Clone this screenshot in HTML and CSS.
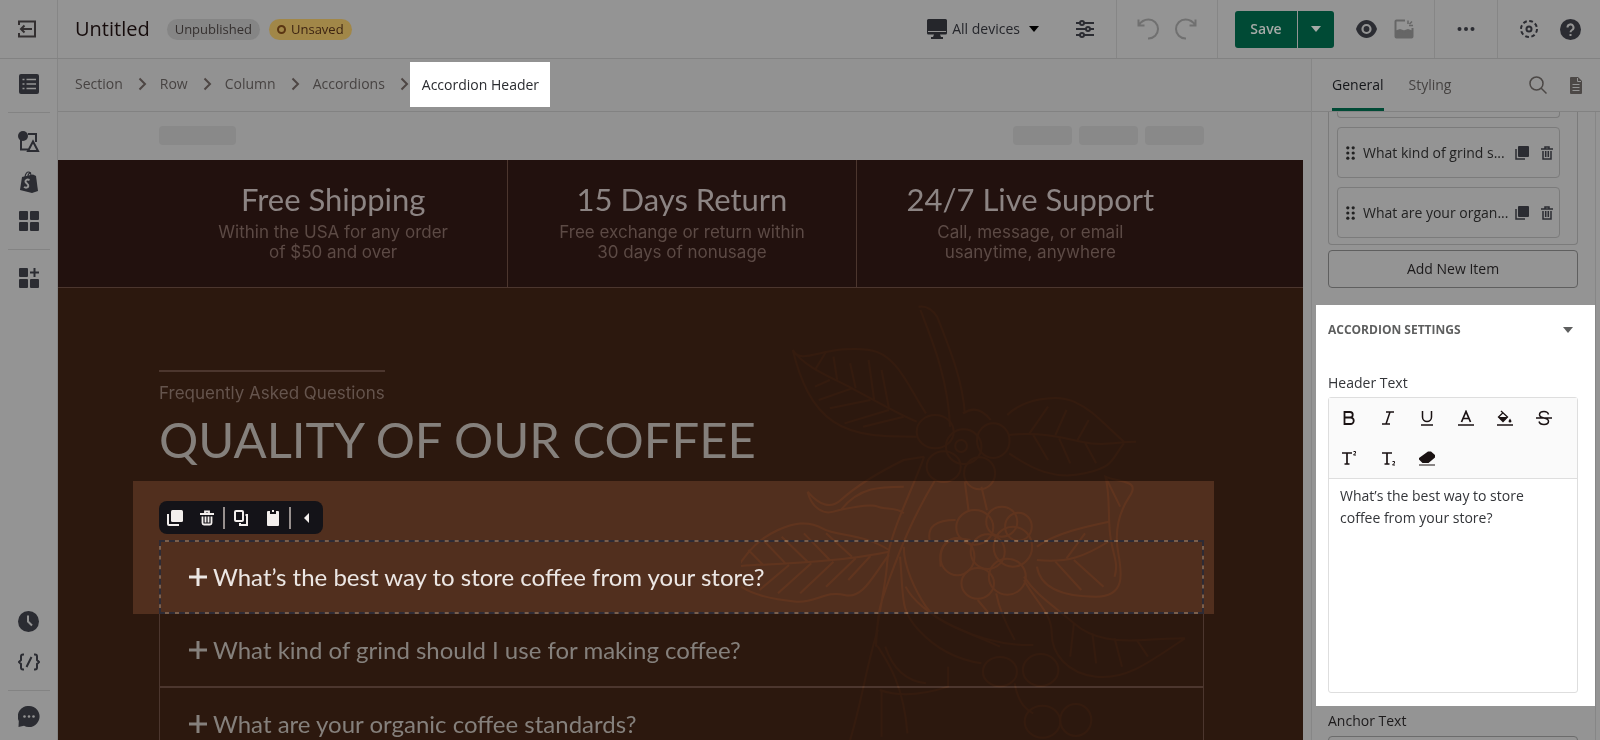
FILE: index.html
```html
<!DOCTYPE html>
<html lang="en">
<head>
<meta charset="utf-8">
<title>Untitled – Page editor</title>
<link rel="stylesheet" href="styles.css">
</head>
<body>
<div class="app">
  <header class="topbar">
    <button class="exit" aria-label="Exit editor">
      <svg width="20" height="20" viewBox="0 0 20 20" fill="none" stroke="currentColor" stroke-width="2"><path d="M2 6V2.500H18V17.500H2V14M15 10H4M7.500 6.500L4 10l3.500 3.500"/></svg>
    </button>
    <div class="title-area">
      <h1 class="page-title">Untitled</h1>
      <span class="pill">Unpublished</span>
      <span class="pill pill-warn"><i class="ring"></i>Unsaved</span>
    </div>
    <div class="group group-devices">
      <button class="devices">
        <svg width="20" height="20" viewBox="0 0 20 20" fill="currentColor"><path d="M1.500 0h17A1.500 1.500 0 0 1 20 1.500V14a1.500 1.500 0 0 1-1.500 1.500H13l1 2.500h2v2H4v-2h2l1-2.500H1.500A1.500 1.500 0 0 1 0 14V1.500A1.500 1.500 0 0 1 1.500 0z"/><path d="M1 12.500h18" stroke="#949494"/></svg>
        <span>All devices</span>
        <svg class="caret" width="10" height="6" viewBox="0 0 10 6"><path d="M0 0h10L5 6z"/></svg>
      </button>
      <button class="icon" aria-label="Settings">
        <svg width="18" height="18" viewBox="0 0 18 18" fill="#949494" stroke="currentColor" stroke-width="2"><path d="M0 3h18M0 9h18M0 15h18"/><circle cx="6" cy="3" r="2"/><circle cx="12" cy="9" r="2"/><circle cx="6" cy="15" r="2"/></svg>
      </button>
    </div>
    <div class="group group-history">
      <button class="icon faded" aria-label="Undo"><svg width="22" height="22" viewBox="0 0 22 22" fill="none" stroke="currentColor" stroke-width="2"><path d="M1.500 1.500v6h6M1.500 7.500C4 3.500 8 1.500 11.500 1.500a9 9 0 0 1 0 19H11"/></svg></button>
      <button class="icon faded" aria-label="Redo"><svg width="22" height="22" viewBox="0 0 22 22" fill="none" stroke="currentColor" stroke-width="2"><path d="M20.500 1.500v6h-6M20.500 7.500C18 3.500 14 1.500 10.500 1.500a9 9 0 0 0 0 19H11"/></svg></button>
    </div>
    <div class="group group-save">
      <div class="split">
        <button class="save">Save</button>
        <button class="save-more" aria-label="More save options"><svg width="10" height="6" viewBox="0 0 10 6" fill="currentColor"><path d="M0 0h10L5 6z"/></svg></button>
      </div>
      <button class="icon" aria-label="Preview"><svg width="21" height="18" viewBox="0 0 21 18"><path d="M10.500 0C5.500 0 1.800 3.500 0 9c1.800 5.500 5.500 9 10.500 9S19.200 14.500 21 9C19.200 3.500 15.500 0 10.500 0z" fill="currentColor"/><circle cx="10.500" cy="9" r="4" fill="currentColor" stroke="#949494" stroke-width="2.200"/></svg></button>
      <button class="icon faded-strong" aria-label="Optimize images"><svg width="20" height="20" viewBox="0 0 20 20" fill="none" stroke="currentColor" stroke-width="2"><path d="M11 1.500H2.500a1 1 0 0 0-1 1v15a1 1 0 0 0 1 1h15a1 1 0 0 0 1-1V9"/><path d="M2 12.500l4-1.500 4 1.500 4-1.500 4 1.500V18H2z" fill="currentColor"/><path d="M14 5V1.500M15.500 5L18 2.500M15 6.500h4" stroke-width="1.500"/></svg></button>
    </div>
    <div class="group group-more">
      <button class="icon" aria-label="More actions"><svg width="18" height="6" viewBox="0 0 18 6" fill="currentColor"><circle cx="2.500" cy="3" r="2"/><circle cx="9" cy="3" r="2"/><circle cx="15.500" cy="3" r="2"/></svg></button>
    </div>
    <div class="group group-help">
      <button class="icon" aria-label="Configuration"><svg width="18" height="18" viewBox="0 0 18 18" fill="none" stroke="currentColor" stroke-width="2"><circle cx="9" cy="9" r="8" stroke-dasharray="3.800 2.480"/><circle cx="9" cy="9" r="2.500"/></svg></button>
      <button class="icon" aria-label="Help"><svg width="21" height="21" viewBox="0 0 21 21"><circle cx="10.500" cy="10.500" r="10.500" fill="currentColor"/><path d="M7.500 8.500a3 3 0 1 1 4.500 2.500c-1 .6-1.500 1-1.500 2.300M10.500 15v2" fill="none" stroke="#949494" stroke-width="2"/></svg></button>
    </div>
  </header>

  <aside class="rail">
    <button class="icon" aria-label="Outline"><svg width="20" height="20" viewBox="0 0 20 20"><rect width="20" height="20" rx="2" fill="currentColor"/><path d="M7.500 5.500H17M7.500 10H17M7.500 14.500H17M3.500 5.500h2M3.500 10h2M3.500 14.500h2" stroke="#949494" stroke-width="1.700"/></svg></button>
    <hr>
    <button class="icon" aria-label="Elements"><svg width="22" height="22" viewBox="0 0 22 22" fill="none" stroke="currentColor" stroke-width="2"><path d="M10 3h8v8M3 9v9.500h7"/><circle cx="5" cy="5" r="5" fill="currentColor" stroke="none"/><path d="M15 10.500L10 20h10z"/></svg></button>
    <button class="icon" aria-label="Shopify"><svg width="20" height="22" viewBox="0 0 20 22"><path d="M3 6l11-2.500 3 1.500 2 15-6 2L1 19z" fill="currentColor"/><path d="M6 6C6.500 3 8 1 9.500 1s2.500 1.500 2.500 4M9 5c0-2 1.500-3.500 3-3" fill="none" stroke="currentColor" stroke-width="1.200"/><path d="M10.500 9C8 8 6.300 9 6.500 10.700S9.700 13 9.300 15s-2.800 2-4.300 1" fill="none" stroke="#949494" stroke-width="2"/></svg></button>
    <button class="icon" aria-label="Blocks"><svg width="20" height="20" viewBox="0 0 20 20" fill="currentColor"><rect width="9" height="9" rx="1"/><rect x="11" width="9" height="9" rx="1"/><rect y="11" width="9" height="9" rx="1"/><rect x="11" y="11" width="9" height="9" rx="1"/></svg></button>
    <hr>
    <button class="icon" aria-label="Add block"><svg width="20" height="20" viewBox="0 0 20 20" fill="currentColor"><rect width="9" height="9" rx="1"/><rect y="11" width="9" height="9" rx="1"/><rect x="11" y="11" width="9" height="9" rx="1"/><path d="M15.500 0v9M11 4.500h9" stroke="currentColor" stroke-width="2"/></svg></button>
    <div class="rail-end">
      <button class="icon" aria-label="History"><svg width="21" height="21" viewBox="0 0 21 21"><circle cx="10.500" cy="10.500" r="10.500" fill="currentColor"/><path d="M10 4.500v6l4 4" fill="none" stroke="#949494" stroke-width="2"/></svg></button>
      <button class="icon" aria-label="Custom code"><svg width="22" height="18" viewBox="0 0 22 18" fill="none" stroke="currentColor" stroke-width="2"><path d="M6 1.500H5C3.500 1.500 3 2.300 3 3.500V7L1 9l2 2v3.500c0 1.200.5 2 2 2h1M16 1.500h1c1.500 0 2 .8 2 2V7l2 2-2 2v3.500c0 1.200-.5 2-2 2h-1M13.500 4l-5 10"/></svg></button>
      <hr>
      <button class="icon" aria-label="Chat"><svg width="22" height="21" viewBox="0 0 22 21"><path d="M11 0a10.500 10.500 0 1 1-5 19.700L.5 21l.3-6A10.500 10.500 0 0 1 11 0z" fill="currentColor"/><g fill="#949494"><circle cx="6.500" cy="10.500" r="1.300"/><circle cx="11" cy="10.500" r="1.300"/><circle cx="15.500" cy="10.500" r="1.300"/></g></svg></button>
    </div>
  </aside>

  <main class="stage">
    <nav class="crumbs" aria-label="Breadcrumb">
      <a href="#">Section</a>
      <svg class="chev" width="9" height="14" viewBox="0 0 9 14"><path d="M1.500 1.500L7 7l-5.500 5.500"/></svg>
      <a href="#">Row</a>
      <svg class="chev" width="9" height="14" viewBox="0 0 9 14"><path d="M1.500 1.500L7 7l-5.500 5.500"/></svg>
      <a href="#">Column</a>
      <svg class="chev" width="9" height="14" viewBox="0 0 9 14"><path d="M1.500 1.500L7 7l-5.500 5.500"/></svg>
      <a href="#">Accordions</a>
      <svg class="chev" width="9" height="14" viewBox="0 0 9 14"><path d="M1.500 1.500L7 7l-5.500 5.500"/></svg>
      <a href="#" class="current" aria-current="page">Accordion Header</a>
    </nav>
    <div class="canvas">
      <div class="skeleton"><i class="wide"></i><i></i><i></i><i></i></div>
      <section class="promo">
        <div class="promo-grid">
          <div class="perk"><h2>Free Shipping</h2><p>Within the USA for any order<br>of $50 and over</p></div>
          <div class="perk"><h2>15 Days Return</h2><p>Free exchange or return within<br>30 days of nonusage</p></div>
          <div class="perk"><h2>24/7 Live Support</h2><p>Call, message, or email<br>usanytime, anywhere</p></div>
        </div>
      </section>
      <section class="faq">
        <svg class="botanical" viewBox="0 0 1568 1380" preserveAspectRatio="none" fill="none">
          <g>
            <path d="M480 80Q510 75 530 110C570 220 600 310 605 400M485 90C520 190 560 300 565 440M140 210C170 260 240 290 300 325S420 400 475 425M140 210C160 300 190 380 250 425S390 470 475 470M140 210C160 250 200 215 280 208S390 220 420 260S470 350 500 400"/>
            <path d="M200 270L230 215M260 300L250 230M310 325L295 250M360 360L345 240M400 385L380 270M240 300L200 320M300 325L210 360M350 360L240 385M400 390L280 430M440 410L330 440"/>
            <path d="M725 465C800 455 860 470 920 485S1020 485 1068 485M720 405C760 360 850 340 900 365S970 420 1035 485M725 520C790 570 850 600 930 580S1000 540 1035 490M780 460L830 380M850 465L880 390M910 480L940 420M790 465L830 540M860 475L890 550M930 488L960 550"/>
            <ellipse cx="525" cy="455" rx="50" ry="50"/><ellipse cx="602" cy="500" rx="48" ry="52"/><ellipse cx="595" cy="498" rx="16" ry="18"/><ellipse cx="682" cy="482" rx="44" ry="52"/><ellipse cx="548" cy="560" rx="46" ry="46"/><ellipse cx="645" cy="580" rx="42" ry="48"/><path d="M600 400Q640 370 675 420"/>
            <path d="M180 635Q230 700 270 660Q330 600 440 540L495 530M180 635C190 680 220 705 250 695S350 670 370 680S420 680 440 700M270 690C320 620 380 620 440 620"/>
            <path d="M495 530C460 640 400 760 395 850S350 1100 370 1100M525 600C460 720 430 810 400 900S370 1000 365 1100M440 800C440 860 470 930 500 980S600 1050 700 1100M430 830C440 960 430 990 480 1050S590 1140 650 1150"/>
            <path d="M-30 860C80 850 250 850 400 815M-30 900C20 800 60 770 100 750S180 720 220 745S330 760 400 810M0 920C40 950 100 960 150 965S230 930 280 945S360 880 400 825M60 855L20 810M120 850L60 780M180 845L110 770M240 840L170 760M300 830L230 760M130 855L50 930M190 850L100 940M250 845L160 940M310 835L230 920M350 828L290 900"/>
            <path d="M605 605L615 690M650 620L665 690M510 780Q500 720 580 720M540 860Q530 760 620 780"/>
            <ellipse cx="632" cy="742" rx="50" ry="52"/><ellipse cx="705" cy="725" rx="42" ry="45"/><ellipse cx="750" cy="740" rx="36" ry="42"/><ellipse cx="735" cy="800" rx="52" ry="60"/><ellipse cx="667" cy="815" rx="46" ry="52"/><ellipse cx="585" cy="830" rx="46" ry="56"/><ellipse cx="640" cy="910" rx="44" ry="46"/><ellipse cx="720" cy="890" rx="50" ry="54"/>
            <path d="M800 840C880 850 930 830 1000 780M800 800C850 760 930 740 995 725M800 860C810 930 880 950 960 950S1030 880 1020 820S1020 700 1050 650S1030 610 985 590C1000 650 990 720 1000 780S1020 850 1010 890M850 845L920 930M900 840L980 920M880 835L930 760M985 590L1025 680"/>
            <path d="M765 890C800 950 850 980 900 1030S1020 1085 1090 1080S1180 1075 1200 1075M765 900C800 970 840 1000 840 1060S880 1180 960 1190S1100 1150 1200 1075M900 1030L890 1130M950 1060L960 1150M1010 1075L1030 1160M1070 1080L1100 1130M445 920C480 1000 640 1100 790 1095M690 940Q700 1000 740 1080M640 960L670 1000"/>
            <ellipse cx="700" cy="1175" rx="46" ry="44"/><ellipse cx="810" cy="1170" rx="48" ry="48"/><ellipse cx="815" cy="1325" rx="48" ry="48"/><ellipse cx="905" cy="1320" rx="42" ry="48"/>
            <path d="M370 1050C340 1150 330 1250 295 1380M370 1100C400 1150 440 1220 450 1360M375 1230Q450 1260 560 1220L560 1160M390 1100Q420 1200 500 1210M380 1230L380 1370M740 1210Q750 1280 790 1300"/>
          </g>
        </svg>
        <div class="faq-inner">
          <p class="eyebrow">Frequently Asked Questions</p>
          <h2 class="faq-title">QUALITY OF OUR COFFEE</h2>
          <div class="spotlight">
            <div class="el-toolbar" role="toolbar" aria-label="Element actions">
              <button aria-label="Duplicate"><svg width="16" height="16" viewBox="0 0 16 16"><rect x="4" width="12" height="12" rx="1.500" fill="currentColor"/><path d="M1 4v10q0 1 1 1h10" fill="none" stroke="currentColor" stroke-width="2"/></svg></button>
              <button aria-label="Delete"><svg width="14" height="16" viewBox="0 0 14 16" fill="none" stroke="currentColor" stroke-width="1.800"><path d="M0 4h14M5 3.500V1.500h4v2M2.500 6.500V13q0 1.500 1.500 1.500h6q1.500 0 1.500-1.500V6.500M5.500 6.500v6M8.500 6.500v6"/></svg></button>
              <i class="bar"></i>
              <button aria-label="Copy style"><svg width="14" height="16" viewBox="0 0 14 16" fill="none" stroke="currentColor" stroke-width="2"><rect x="1" y="1" width="8" height="10" rx="1"/><path d="M11.500 5H13v10H6v-2"/></svg></button>
              <button aria-label="Paste style"><svg width="12" height="16" viewBox="0 0 12 16"><path d="M1 1h2v3h6V1h2q1 0 1 1v13q0 1-1 1H1q-1 0-1-1V2q0-1 1-1z" fill="currentColor"/><path d="M5 0h2v2H5z" fill="currentColor"/></svg></button>
              <i class="bar"></i>
              <button aria-label="Collapse"><svg width="6" height="10" viewBox="0 0 6 10" fill="currentColor"><path d="M5 0v10L0 5z"/></svg></button>
            </div>
            <button class="question selected"><svg class="plus" width="18" height="18" viewBox="0 0 18 18"><path d="M9 0v18M0 9h18"/></svg>What’s the best way to store coffee from your store?</button>
          </div>
          <button class="question"><svg class="plus" width="18" height="18" viewBox="0 0 18 18"><path d="M9 0v18M0 9h18"/></svg>What kind of grind should I use for making coffee?</button>
          <button class="question"><svg class="plus" width="18" height="18" viewBox="0 0 18 18"><path d="M9 0v18M0 9h18"/></svg>What are your organic coffee standards?</button>
        </div>
      </section>
    </div>
  </main>

  <aside class="panel">
    <div class="tabs">
      <button class="tab active">General</button>
      <button class="tab">Styling</button>
      <span class="tab-tools">
        <button class="icon muted" aria-label="Search"><svg width="18" height="18" viewBox="0 0 18 18" fill="none" stroke="currentColor" stroke-width="1.500"><circle cx="7.500" cy="7.500" r="6.500"/><path d="M12 12l5.500 5.500"/></svg></button>
        <button class="icon muted" aria-label="Docs"><svg width="12" height="17" viewBox="0 0 12 17"><path d="M1 0h7l4 4v12q0 1-1 1H1q-1 0-1-1V1q0-1 1-1z" fill="currentColor"/><path d="M2.500 7.500h7M2.500 10.500h7M2.500 13.500h7M7.500 1v3.500H11" fill="none" stroke="#949494"/></svg></button>
      </span>
    </div>
    <div class="panel-body">
      <div class="items">
        <div class="item-tail"></div>
        <div class="item">
          <svg width="9" height="14" viewBox="0 0 9 14" fill="currentColor"><circle cx="1.800" cy="1.800" r="1.600"/><circle cx="7.200" cy="1.800" r="1.600"/><circle cx="1.800" cy="7" r="1.600"/><circle cx="7.200" cy="7" r="1.600"/><circle cx="1.800" cy="12.200" r="1.600"/><circle cx="7.200" cy="12.200" r="1.600"/></svg>
          <span class="item-name">What kind of grind s...</span>
          <button class="icon" aria-label="Duplicate item"><svg width="14" height="14" viewBox="0 0 14 14"><rect x="3" width="11" height="11" rx="1" fill="currentColor"/><path d="M1 3v10h9" fill="none" stroke="currentColor" stroke-width="1.500"/></svg></button>
          <button class="icon" aria-label="Delete item"><svg width="12" height="14" viewBox="0 0 12 14" fill="none" stroke="currentColor" stroke-width="1.500"><path d="M0 3h12M4 3V1h4v2M2 5v8h8V5M4.700 5v6M7.300 5v6"/></svg></button>
        </div>
        <div class="item">
          <svg width="9" height="14" viewBox="0 0 9 14" fill="currentColor"><circle cx="1.800" cy="1.800" r="1.600"/><circle cx="7.200" cy="1.800" r="1.600"/><circle cx="1.800" cy="7" r="1.600"/><circle cx="7.200" cy="7" r="1.600"/><circle cx="1.800" cy="12.200" r="1.600"/><circle cx="7.200" cy="12.200" r="1.600"/></svg>
          <span class="item-name">What are your organ...</span>
          <button class="icon" aria-label="Duplicate item"><svg width="14" height="14" viewBox="0 0 14 14"><rect x="3" width="11" height="11" rx="1" fill="currentColor"/><path d="M1 3v10h9" fill="none" stroke="currentColor" stroke-width="1.500"/></svg></button>
          <button class="icon" aria-label="Delete item"><svg width="12" height="14" viewBox="0 0 12 14" fill="none" stroke="currentColor" stroke-width="1.500"><path d="M0 3h12M4 3V1h4v2M2 5v8h8V5M4.700 5v6M7.300 5v6"/></svg></button>
        </div>
      </div>
      <button class="add">Add New Item</button>
      <section class="settings">
        <button class="settings-head">ACCORDION SETTINGS<svg width="10" height="6" viewBox="0 0 10 6" fill="currentColor"><path d="M0 0h10L5 6z"/></svg></button>
        <label class="field-label" for="header-text">Header Text</label>
        <div class="editor">
          <div class="tools">
            <button aria-label="Bold"><svg width="16" height="16" viewBox="0 0 16 16" fill="none" stroke="currentColor" stroke-width="1.800"><path d="M3.500 2H9a2.700 2.700 0 0 1 0 5.500H3.500zM3.500 7.500h6a3 3 0 0 1 0 6.500h-6z"/></svg></button>
            <button aria-label="Italic"><svg width="16" height="16" viewBox="0 0 16 16" fill="none" stroke="currentColor" stroke-width="1.500"><path d="M6 2h8M2 14h8M10 2L6 14"/></svg></button>
            <button aria-label="Underline"><svg width="16" height="16" viewBox="0 0 16 16" fill="none" stroke="currentColor" stroke-width="1.500"><path d="M3.500 1v6a4.500 4.500 0 0 0 9 0V1M2 15h12"/></svg></button>
            <button aria-label="Text color"><svg width="16" height="16" viewBox="0 0 16 16" fill="none" stroke="currentColor" stroke-width="1.700"><path d="M3.500 12L8 1.500 12.500 12M5 8.500h6M0 15h16"/></svg></button>
            <button aria-label="Fill color"><svg width="16" height="16" viewBox="0 0 16 16" fill="none" stroke="currentColor" stroke-width="1.300"><path d="M4 1l6.500 6L6 11.500 1.500 7 6 2.800M0 15h16" /><path d="M1.500 7h9L6 11.500zM13 8.500l1.500 2.500a1.500 1.500 0 1 1-3 0z" fill="currentColor" stroke="none"/></svg></button>
            <button aria-label="Strikethrough"><svg width="16" height="16" viewBox="0 0 16 16" fill="none" stroke="currentColor" stroke-width="1.500"><path d="M12.500 4.500C12 2.500 10.500 1.500 8 1.500c-3 0-4.500 1.500-4.500 3.200S5 7.300 8 8s4.500 1.600 4.500 3.300S11 14.500 8 14.500s-4.500-1-5-3M0 8h16"/></svg></button>
            <button aria-label="Superscript"><svg width="16" height="16" viewBox="0 0 16 16" fill="none" stroke="currentColor" stroke-width="1.700"><path d="M1 3h10M6 3v11M3.500 14h5"/><path d="M12.500 1.500h2v1.500l-2 2h2.500" stroke-width="1"/></svg></button>
            <button aria-label="Subscript"><svg width="16" height="16" viewBox="0 0 16 16" fill="none" stroke="currentColor" stroke-width="1.700"><path d="M2 3h10M7 3v11M4.500 14h5"/><path d="M12.500 11.500h2V13l-2 2H15" stroke-width="1"/></svg></button>
            <button aria-label="Clear formatting"><svg width="16" height="16" viewBox="0 0 16 16" fill="currentColor"><path d="M9 1.500h3L16 5v2.500L9.500 13h-6L0 9.500V8zM0 14.500h16v1H0z"/></svg></button>
          </div>
          <textarea id="header-text" class="editor-text">What’s the best way to store coffee from your store?</textarea>
        </div>
      </section>
      <label class="field-label anchor-label" for="anchor">Anchor Text</label>
      <input id="anchor" class="anchor" type="text">
    </div>
  </aside>
</div>
</body>
</html>
```
FILE: styles.css
```css
* { box-sizing: border-box; }
body {
  margin: 0;
  background: #949494;
  color: #1c1a1b;
  font: 15px/20px "Open Sans", sans-serif;
}
button, input, textarea { font: inherit; color: inherit; }
button {
  display: inline-flex;
  align-items: center;
  justify-content: center;
  margin: 0;
  padding: 0;
  border: 0;
  background: none;
}
h1, h2, p { margin: 0; }
svg { display: block; flex: none; }
hr { width: 42px; margin: 0; border: 0; border-top: 1px solid #838383; }
.icon { color: #2b2c32; }
.faded { color: #707070; }
.faded-strong { color: #666; }
.muted { color: #4c4846; }

.app {
  display: grid;
  grid-template: 59px minmax(0, 1fr) / 58px minmax(0, 1fr) 289px;
  height: 100vh;
  overflow: hidden;
}

/* Top bar */
.topbar {
  grid-column: 1 / -1;
  display: flex;
  align-items: stretch;
  border-bottom: 1px solid #828282;
}
.exit { width: 58px; color: #332f30; padding-right: 4px; border-right: 1px solid #868686; }
.title-area { display: flex; align-items: center; gap: 9px; margin-right: auto; padding-left: 17px; }
.page-title { margin-right: 8px; font-size: 20px; line-height: 28px; font-weight: 500; color: #160c0c; }
.pill {
  display: flex;
  align-items: center;
  gap: 5px;
  height: 21px;
  padding: 0 8px;
  border-radius: 11px;
  background: #858585;
  color: #35302f;
  font-size: 13px;
}
.pill-warn { background: #a18748; color: #3d2312; }
.ring { width: 9px; height: 9px; border: 2px solid #5a3512; border-radius: 50%; }
.group { display: flex; align-items: center; border-left: 1px solid #868686; }
.group-devices { gap: 37px; padding-right: 22px; border-left: 0; }
.devices { gap: 5px; font-size: 14px; color: #25262b; }
.caret { margin-left: 4px; }
.group-history { gap: 16px; padding: 0 20px; }
.group-save { padding: 0 20px 0 17px; gap: 17px; }
.split { display: flex; height: 37px; margin-right: 5px; border-radius: 3px; overflow: hidden; background: #004a35; color: #a5aaa7; }
.save { width: 62px; font-size: 14px; font-weight: 600; }
.save-more { width: 37px; border-left: 1px solid #949494; }
.group-more { padding: 0 22px; }
.group-help { gap: 22px; padding: 0 19px 0 22px; }

/* Left rail */
.rail {
  display: flex;
  flex-direction: column;
  align-items: center;
  gap: 18px;
  padding: 15px 0 13px;
  border-right: 1px solid #868686;
}
.rail .icon { min-height: 20px; }
.rail-end { display: flex; flex-direction: column; align-items: center; gap: 20px; margin-top: auto; }
.rail-end hr { margin: -2px 0 -5px; }

/* Stage */
.stage { display: flex; flex-direction: column; min-width: 0; background: #929292; overflow: hidden; }
.crumbs {
  flex: none;
  display: flex;
  align-items: center;
  height: 53px;
  padding: 0 0 2px 17px;
  border-bottom: 1px solid #828282;
}
.crumbs a { color: #474342; font-size: 14px; text-decoration: none; }
.crumbs .current { align-self: stretch; display: flex; align-items: center; margin: 3px 0 2px 1px; padding: 0 11px 0 12px; background: #fff; color: #2a2c30; }
.chev { margin: 0 13px 0 15px; fill: none; stroke: #4e4644; stroke-width: 2; }
.crumbs .chev:nth-last-child(2) { margin-right: 0; }
.canvas { flex: 1; display: flex; flex-direction: column; margin-right: 8px; overflow: hidden; }
.skeleton { flex: none; display: flex; gap: 7px; height: 48px; padding: 14px 99px 15px 101px; }
.skeleton i { width: 59px; border-radius: 4px; background: #898989; }
.skeleton .wide { width: 77px; margin-right: auto; }

.promo { flex: none; background: #22110e; border-bottom: 1px solid #4c362e; padding: 0 99px 0 101px; }
.promo-grid { display: grid; grid-template-columns: repeat(3, 1fr); }
.perk { padding: 20px 0 25px; text-align: center; }
.perk + .perk { border-left: 1px solid #4c362e; }
.perk h2 { margin-bottom: 4px; font: 400 31px/38px Lato, sans-serif; color: #8c8483; }
.perk p { font: 17px/20px Inter, sans-serif; color: #5c4a45; }

.faq { position: relative; flex: 1; background: #2c180e; padding: 82px 99px 0 101px; }
.botanical {
  position: absolute;
  right: -18px;
  top: -8px;
  z-index: 1;
  width: 580px;
  height: 460px;
  stroke: #281a00;
  stroke-width: 2;
  mix-blend-mode: color-dodge;
  pointer-events: none;
}
.botanical path, .botanical ellipse { vector-effect: non-scaling-stroke; }
.eyebrow { width: fit-content; border-top: 2px solid #4c362e; padding-top: 9px; font: 17px/24px Inter, sans-serif; color: #65544d; }
.faq-title { margin-top: 6px; font: 400 49px/56px Lato, sans-serif; color: #85807c; }
.spotlight { margin: 14px -10px 0 -26px; padding: 20px 10px 0 26px; background: #512f1e; }
.el-toolbar { display: flex; align-items: center; width: fit-content; height: 33px; margin-bottom: 6px; border-radius: 8px; background: #141318; color: #f3efed; }
.el-toolbar button { width: 32px; height: 32px; }
.bar { width: 2px; height: 22px; background: #97908e; }
.question {
  display: flex;
  justify-content: flex-start;
  gap: 6px;
  width: 100%;
  height: 74px;
  padding-left: 29px;
  border: 1px solid #4c362e;
  border-top: 0;
  border-bottom-width: 2px;
  color: #85807c;
  font: 24px/30px Lato, sans-serif;
  text-align: left;
}
.question.selected {
  padding-left: 28px;
  border: 2px dashed #2e2b35;
  background: linear-gradient(#512f1e, #512f1e) padding-box, #7a5f4d border-box;
  color: #ece7e4;
}
.plus { fill: none; stroke: currentColor; stroke-width: 3; }

/* Settings panel */
.panel { display: flex; flex-direction: column; border-left: 1px solid #868686; min-width: 0; }
.tabs { flex: none; display: flex; gap: 25px; height: 53px; padding: 0 18px 0 20px; border-bottom: 1px solid #828282; }
.tab { padding-top: 3px; border-bottom: 3px solid transparent; font-size: 14px; color: #454241; }
.tab.active { border-color: #004a35; color: #15171a; font-weight: 500; }
.tab-tools { display: flex; align-items: center; gap: 23px; margin-left: auto; }
.panel-body { flex: 1; display: flex; flex-direction: column; overflow: hidden; margin-right: 4px; border-right: 1px solid #868686; }
.items { flex: none; display: flex; flex-direction: column; gap: 9px; margin: 0 17px 0 16px; padding: 0 17px 6px 8px; border: 1px solid #7b7b7b; border-top: 0; border-radius: 0 0 4px 4px; }
.item-tail { height: 6px; border: 1px solid #7b7b7b; border-top: 0; border-radius: 0 0 4px 4px; }
.item { display: flex; align-items: center; gap: 8px; height: 51px; padding: 0 6px 0 8px; border: 1px solid #7b7b7b; border-radius: 4px; color: #222; }
.item .icon:last-child { margin-left: 4px; }
.item-name { flex: 1; min-width: 0; font-size: 14px; white-space: nowrap; }
.add { flex: none; height: 38px; margin: 5px 17px 17px 16px; border: 1px solid #5f5f5f; border-radius: 4px; font-size: 14px; }
.settings { flex: none; margin-left: 4px; padding: 13px 17px 13px 12px; background: #fff; color: #333539; }
.settings-head { width: 100%; justify-content: space-between; padding-right: 5px; color: #5e5f5f; font-size: 12px; font-weight: 700; }
.field-label { display: block; font-size: 14px; }
.settings .field-label { margin: 33px 0 4px; }
.editor { border: 1px solid #dedede; border-radius: 3px; }
.tools { display: grid; grid-template-columns: repeat(6, 39px); background: #fafafa; border-bottom: 1px solid #dedede; color: #1a1213; }
.tools button { height: 40px; }
.editor-text { display: block; width: 100%; height: 213px; padding: 6px 11px; border: 0; outline: 0; resize: none; overflow: hidden; background: none; font-size: 14px; line-height: 22px; }
.anchor-label { margin: 5px 16px; }
.anchor { flex: none; height: 38px; margin: 0 17px 0 16px; border: 1px solid #6b6b6b; border-radius: 4px; background: none; }
```
